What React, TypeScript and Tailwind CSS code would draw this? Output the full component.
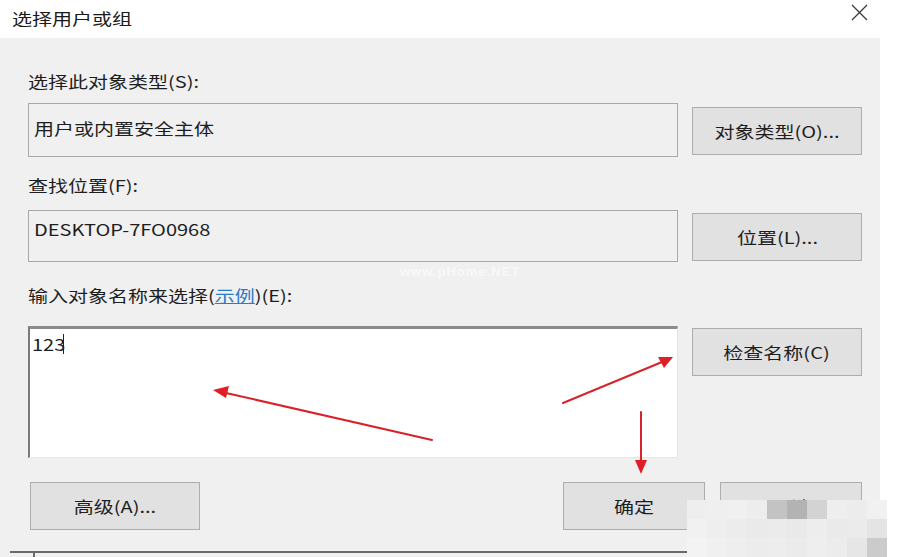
import React from "react";

const FONT = "font-['Noto_Sans_CJK_SC','Noto_Sans',sans-serif]";

// the reference capture is stretched sideways, so text gets the same stretch
const Wide = ({children, center}: {children: React.ReactNode, center?: boolean}) => (
    <span className={`inline-block whitespace-nowrap scale-x-125 ${center ? "origin-center" : "origin-left"}`}>
        {children}
    </span>
);

const DialogButton = ({label, className}: {label: string, className?: string}) => (
    <button className={`h-[48px] bg-[#e1e1e1] border border-[#adadad] text-[16px] text-[#1e1e1e] flex items-center justify-center ${className || ""}`}>
        <Wide center={true}>{label}</Wide>
    </button>
);

const Label = ({children, className}: {children: React.ReactNode, className?: string}) => (
    <div className={`h-[20px] leading-[20px] text-[16px] text-[#1e1e1e] ${className || ""}`}>
        <Wide>{children}</Wide>
    </div>
);

const ReadonlyBox = ({value, className}: {value: string, className?: string}) => (
    <div className={`w-[650px] border border-[#a8a8a8] bg-[#f0f0f0] px-[5px] text-[16px] leading-[20px] text-[#1e1e1e] ${className || ""}`}>
        <Wide>{value}</Wide>
    </div>
);

// pixelated patch over the cancel button
const mosaic: string[][] = [
    ["#eeeeee", "#efefef", "#f0f0f0", "#ededed", "#c3c3c3", "#b3b3b3", "#d3d3d3", "#eeeeee", "#ececec", "#f1f1f1"],
    ["#f1f1f1", "#eeeeee", "#ececec", "#eaeaea", "#ebebeb", "#e9e9e9", "#ededed", "#eaeaea", "#ebebeb", "#e4e4e4"],
    ["#f3f3f3", "#f0f0f0", "#eeeeee", "#ececec", "#ededed", "#ebebeb", "#eeeeee", "#ececec", "#e6e6e6", "#cbcbcb"],
];

const Arrows = () => (
    <svg className="absolute left-0 top-0 pointer-events-none" width="907" height="557" viewBox="0 0 907 557">
        <g stroke="#d8222a" strokeWidth="2" fill="none" strokeLinecap="round">
            <line x1="432" y1="440" x2="226" y2="393"/>
            <line x1="563" y1="403" x2="662" y2="362"/>
            <line x1="641" y1="412" x2="641" y2="462"/>
        </g>
        <g fill="#e01e25">
            <polygon points="213,390 229,386 226,398"/>
            <polygon points="673,357 664,368 658,357"/>
            <polygon points="641,474 635,460 647,460"/>
        </g>
    </svg>
);

export default function App() {
    return (
        <div className={`relative w-[907px] h-[557px] bg-white overflow-hidden ${FONT}`}>
            <div className="h-[38px] flex items-center justify-between pl-[12px] pr-[39px]">
                <span className="text-[16px] text-[#1a1a1a] -mt-[2px]"><Wide>选择用户或组</Wide></span>
                <svg width="17" height="17" viewBox="0 0 17 17" className="-mt-[14px]">
                    <path d="M1 1 L16 16 M16 1 L1 16" stroke="#3a3a3a" strokeWidth="1.3"/>
                </svg>
            </div>
            <div className="w-[880px] h-[519px] bg-[#f0f0f0] pl-[28px] flex flex-col">
                <Label className="mt-[33px]">选择此对象类型(S):</Label>
                <div className="mt-[12px] flex gap-[14px] items-start">
                    <ReadonlyBox value="用户或内置安全主体" className="h-[54px] pt-[14px]"/>
                    <DialogButton label="对象类型(O)..." className="w-[170px] mt-[4px]"/>
                </div>
                <Label className="mt-[18px]">查找位置(F):</Label>
                <div className="mt-[15px] flex gap-[14px] items-start">
                    <ReadonlyBox value="DESKTOP-7FO0968" className="h-[52px] pt-[8px]"/>
                    <DialogButton label="位置(L)..." className="w-[170px] mt-[3px]"/>
                </div>
                <Label className="mt-[23px]">
                    输入对象名称来选择(<span className="text-[#2d7cc6] underline">示例</span>)(E):
                </Label>
                <div className="mt-[21px] flex gap-[14px] items-start">
                    <div className="w-[650px] h-[132px] bg-white border-t-[3px] border-l-2 border-r border-b border-t-[#8c8c8c] border-l-[#7a7a7a] border-r-[#e2e2e2] border-b-[#e6e6e6] px-[2px] pt-[4px]">
                        <div className="flex items-center">
                            <span className="text-[16px] leading-[22px] text-[#1e1e1e]"><Wide>123</Wide></span>
                            <span className="ml-[4px] w-[1px] h-[20px] bg-[#222]"/>
                        </div>
                    </div>
                    <DialogButton label="检查名称(C)" className="w-[170px] mt-[2px]"/>
                </div>
                <div className="mt-[24px] flex items-start">
                    <DialogButton label="高级(A)..." className="w-[170px] ml-[2px]"/>
                    <DialogButton label="确定" className="w-[142px] ml-[363px]"/>
                    <DialogButton label="取消" className="w-[142px] ml-[15px]"/>
                </div>
                <div className="mt-[21px] -ml-[18px] w-[680px] h-[2px] bg-[#6a6a6a] relative">
                    <div className="absolute left-[23px] top-0 w-[2px] h-[6px] bg-[#6a6a6a]"/>
                </div>
            </div>
            <div className="absolute left-[400px] top-[262px] text-[13px] font-bold text-white/60 tracking-[1px] font-['Liberation_Sans',sans-serif]">
                www.pHome.NET
            </div>
            <div className="absolute left-[687px] top-[500px] flex flex-col">
                {mosaic.map((row, r) => (
                    <div key={r} className="flex">
                        {row.map((c, i) => (
                            <div key={i} className="w-[20px] h-[19px]" style={{backgroundColor: c}}/>
                        ))}
                    </div>
                ))}
            </div>
            <Arrows/>
        </div>
    );
}
